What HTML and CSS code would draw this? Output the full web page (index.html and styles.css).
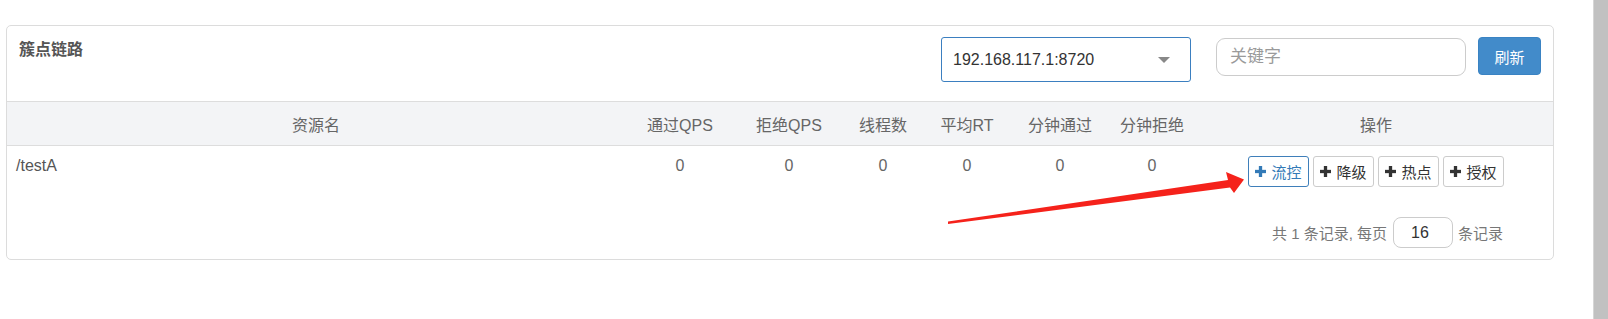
FILE: index.html
```html
<!DOCTYPE html>
<html lang="zh-CN">
<head>
    <meta charset="UTF-8">
    <title>簇点链路</title>
    <link rel="stylesheet" href="styles.css">
</head>
<body>
    <div class="page">
        <div class="main">
            <div class="card">
                <div class="card-head">
                    <span class="title">簇点链路</span>
                    <div class="machine-select">
                        <span>192.168.117.1:8720</span>
                        <span class="caret"></span>
                    </div>
                    <div class="search-box">关键字</div>
                    <button class="refresh-btn">刷新</button>
                </div>

                <table class="resource-table">
                    <colgroup>
                        <col class="col-name">
                        <col class="col-pass">
                        <col class="col-block">
                        <col class="col-thread">
                        <col class="col-rt">
                        <col class="col-min-pass">
                        <col class="col-min-block">
                        <col class="col-ops">
                    </colgroup>
                    <thead>
                        <tr>
                            <th>资源名</th>
                            <th>通过QPS</th>
                            <th>拒绝QPS</th>
                            <th>线程数</th>
                            <th>平均RT</th>
                            <th>分钟通过</th>
                            <th>分钟拒绝</th>
                            <th class="ops">操作</th>
                        </tr>
                    </thead>
                    <tbody>
                        <tr>
                            <td class="name">/testA</td>
                            <td>0</td>
                            <td>0</td>
                            <td>0</td>
                            <td>0</td>
                            <td>0</td>
                            <td>0</td>
                            <td class="ops">
                                <div class="btn-group">
                                    <button class="op-btn primary"><svg class="plus" viewBox="0 0 12 12"><rect x="4.2" y="0" width="3.6" height="12"/><rect x="0" y="4.2" width="12" height="3.6"/></svg>流控</button>
                                    <button class="op-btn"><svg class="plus" viewBox="0 0 12 12"><rect x="4.2" y="0" width="3.6" height="12"/><rect x="0" y="4.2" width="12" height="3.6"/></svg>降级</button>
                                    <button class="op-btn"><svg class="plus" viewBox="0 0 12 12"><rect x="4.2" y="0" width="3.6" height="12"/><rect x="0" y="4.2" width="12" height="3.6"/></svg>热点</button>
                                    <button class="op-btn"><svg class="plus" viewBox="0 0 12 12"><rect x="4.2" y="0" width="3.6" height="12"/><rect x="0" y="4.2" width="12" height="3.6"/></svg>授权</button>
                                </div>
                            </td>
                        </tr>
                    </tbody>
                </table>

                <div class="pager">
                    <span>共 1 条记录, 每页</span>
                    <div class="page-size">16</div>
                    <span>条记录</span>
                </div>
            </div>
        </div>
        <div class="scrollbar"></div>
    </div>

    <svg class="annotation" width="1608" height="319" viewBox="0 0 1608 319">
        <polygon points="948,221.5 1228,180 1226,172 1244,179.5 1234,193 1230,187.5 948,224" fill="#f5221b"/>
    </svg>
</body>
</html>
```

FILE: styles.css
```css
body {
    margin: 0;
    padding: 0;
    background: #fff;
    font-family: "Liberation Sans", "Noto Sans CJK SC", sans-serif;
    color: #555;
}
.page {
    display: flex;
    height: 319px;
    overflow: hidden;
}
.main {
    flex: 1;
    padding: 25px 0 0 6px;
}
.scrollbar {
    width: 14px;
    background-color: #c1c1c1;
    border-left: 1px solid #d6d6d6;
}
.card {
    width: 1548px;
    height: 235px;
    box-sizing: border-box;
    border: 1px solid #dcdcdc;
    border-radius: 5px;
}
.card-head {
    display: flex;
    align-items: flex-start;
    height: 76px;
    box-sizing: border-box;
    padding: 11px 12px 0 12px;
    border-bottom: 1px solid #dddddd;
}
.title {
    font-size: 16px;
    font-weight: bold;
    line-height: 22px;
    margin-top: 2px;
    color: #555;
}
.machine-select {
    margin-left: auto;
    width: 250px;
    height: 45px;
    box-sizing: border-box;
    border: 1px solid #3b7fc0;
    border-radius: 3px;
    display: flex;
    align-items: center;
    justify-content: space-between;
    padding: 0 20px 0 11px;
    font-size: 16px;
    color: #333;
}
.caret {
    width: 0;
    height: 0;
    border-left: 6px solid transparent;
    border-right: 6px solid transparent;
    border-top: 6px solid #888;
    margin-top: 1px;
}
.search-box {
    margin-left: 25px;
    margin-top: 1px;
    width: 250px;
    height: 38px;
    box-sizing: border-box;
    border: 1px solid #cccccc;
    border-radius: 9px;
    padding-left: 13px;
    line-height: 36px;
    font-size: 17px;
    color: #9a9a9a;
}
.refresh-btn {
    margin-left: 12px;
    width: 63px;
    height: 38px;
    border: 1px solid #3a83c3;
    border-radius: 4px;
    background-color: #428bca;
    color: #fff;
    font-family: "Liberation Sans", "Noto Sans CJK SC", sans-serif;
    font-size: 15px;
    padding: 0;
}
.resource-table {
    width: 1546px;
    border-collapse: collapse;
    table-layout: fixed;
}
.col-name { width: 618px; }
.col-pass { width: 110px; }
.col-block { width: 108px; }
.col-thread { width: 80px; }
.col-rt { width: 88px; }
.col-min-pass { width: 98px; }
.col-min-block { width: 86px; }
.col-ops { width: 358px; }
.resource-table th {
    height: 43px;
    padding: 0;
    background-color: #f3f4f6;
    border-bottom: 1px solid #dddddd;
    font-size: 16px;
    font-weight: normal;
    color: #666;
    text-align: center;
}
.resource-table td {
    padding: 10px 0 10px 0;
    font-size: 16px;
    line-height: 20px;
    color: #666;
    text-align: center;
    vertical-align: top;
}
.resource-table td.name {
    text-align: left;
    padding-left: 9px;
    color: #555;
}
.resource-table .ops {
    padding-left: 4px;
}
.btn-group {
    display: flex;
    justify-content: center;
    gap: 4px;
}
.op-btn {
    display: flex;
    align-items: center;
    justify-content: center;
    gap: 5px;
    width: 61px;
    height: 31px;
    padding: 0;
    background: #fff;
    border: 1px solid #cccccc;
    border-radius: 3px;
    font-family: "Liberation Sans", "Noto Sans CJK SC", sans-serif;
    font-size: 15px;
    color: #333;
}
.op-btn .plus {
    width: 11px;
    height: 11px;
    fill: #333;
}
.op-btn.primary {
    border-color: #3f7fba;
    color: #337ab7;
}
.op-btn.primary .plus {
    fill: #337ab7;
}
.pager {
    display: flex;
    align-items: center;
    justify-content: flex-end;
    margin-top: 20px;
    padding-right: 50px;
    font-size: 15px;
    color: #777;
}
.page-size {
    width: 60px;
    height: 31px;
    box-sizing: border-box;
    border: 1px solid #cccccc;
    border-radius: 8px;
    margin: 0 5px 0 6px;
    padding-left: 17px;
    line-height: 29px;
    font-size: 16px;
    color: #333;
}
.annotation {
    position: absolute;
    top: 0;
    left: 0;
    pointer-events: none;
}
```
